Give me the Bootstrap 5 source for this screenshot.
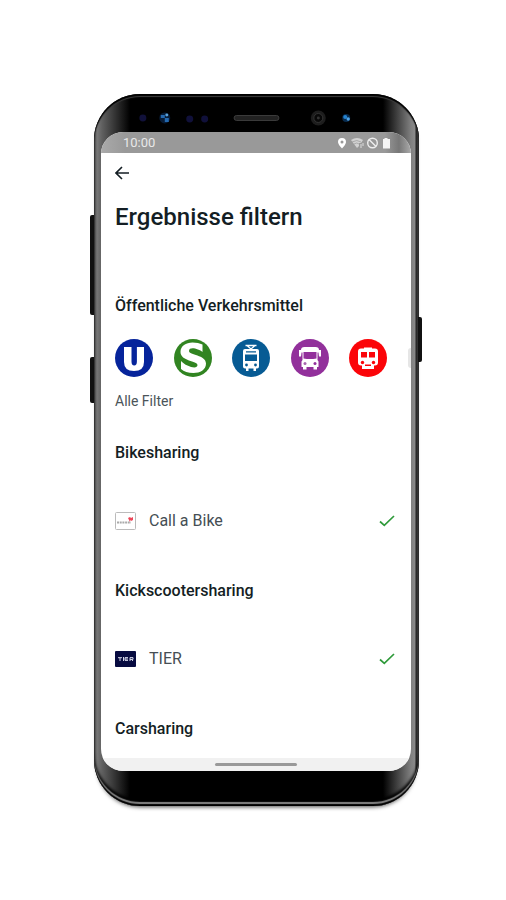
<!DOCTYPE html>
<html lang="de">
<head>
<meta charset="utf-8">
<meta name="viewport" content="width=device-width, initial-scale=1">
<title>Ergebnisse filtern</title>
<link href="https://cdn.jsdelivr.net/npm/bootstrap@5.3.0/dist/css/bootstrap.min.css" rel="stylesheet">
<style>
  body { font-family: Roboto, "Liberation Sans", sans-serif; background: #fff; color: #141e24; }
  .stage { padding: 94px 87px 94px 94px; }
  .phone {
    border-radius: 46px;
    padding: 0 8px 0 7px;
    background: linear-gradient(90deg, #555 0, #777 3px, #606060 8px, #000 36px, #000 calc(100% - 36px), #808080 calc(100% - 8px), #8a8a8a calc(100% - 4px), #222 calc(100% - 3px), #555 100%);
    box-shadow: 0 4px 4px -3px rgba(0,0,0,.7);
  }
  .phone::before {
    content: ""; position: absolute; inset: 0; border-radius: inherit; pointer-events: none;
    box-shadow: inset 0 2px 1px #000, inset 0 3px 1px #444, inset 0 -2px 1px #000, inset 0 -4px 1px #888, inset 0 -7px 3px #000;
  }
  .side-key { position: absolute; width: 4px; background: #111; }
  .key-volume { left: -4px; top: 121px; height: 100px; border-radius: 2px 0 0 2px; }
  .key-assist { left: -4px; top: 263px; height: 46px; border-radius: 2px 0 0 2px; }
  .key-power { right: -3px; top: 223px; height: 45px; border-radius: 0 2px 2px 0; }
  .forehead, .forehead svg { height: 38px; }
  .forehead svg { display: block; width: 100%; }
  .display { background: #fff; border-radius: 22px; }
  .statusbar { height: 21px; padding: 0 20px 0 22px; color: #e8e8e8; font-size: 13px; background: linear-gradient(90deg, #aaa 0, #999 24px, #999 calc(100% - 26px), #777 calc(100% - 12px), #aaa 100%); }
  .view { padding: 0 0 17px 14px; }
  .back { width: 40px; height: 40px; padding: 0; color: #141e24; }
  .back svg { display: block; }
  .page-title { font-size: 24px; line-height: 32px; font-weight: 500; margin: 8px 0 61px; }
  .group-title { font-size: 16px; line-height: 24px; font-weight: 500; margin: 0; }
  .modes { margin-top: 21px; }
  .mode { width: 38px; height: 38px; padding: 0; border: 0; background: none; flex: none; }
  .mode svg { display: block; }
  .next-mode { width: 3px; height: 20px; background: #e6e6e6; border-radius: 10px 0 0 10px; }
  .all-filters { display: block; font-size: 14px; line-height: 20px; margin: 14px 0 30px; color: #4b5459; text-decoration: none; }
  .provider { min-height: 40px; margin: 36px 16px 38px 0; font-size: 16px; line-height: 24px; color: #454e54; gap: 13px; }
  .pick { appearance: none; width: 16px; height: 16px; margin: 0; }
  .pick:checked { background: url("data:image/svg+xml,%3Csvg xmlns='http://www.w3.org/2000/svg' viewBox='0 0 16 16'%3E%3Cpath d='M1 8.5 5.3 12.4 15 3' fill='none' stroke='%232f9a3a' stroke-width='1.7'/%3E%3C/svg%3E") center / contain no-repeat; }
  .homebar { height: 13px; background: #f1f1f1; }
  .home-pill { width: 82px; height: 3px; border-radius: 2px; background: #999; }
  .chin { height: 35px; }
</style>
</head>
<body>
<main class="stage">
  <div class="phone position-relative">
    <span class="side-key key-volume"></span>
    <span class="side-key key-assist"></span>
    <span class="side-key key-power"></span>

    <div class="forehead">
      <svg viewBox="0 0 311 38" aria-hidden="true">
        <circle cx="42" cy="24" r="3.5" fill="#11113a"/>
        <circle cx="64" cy="24" r="5.5" fill="#071b36"/>
        <path d="M60 21h4v3h-4zM64 24h4v4h-4z" fill="#2469b0"/><circle cx="66" cy="21" r="1.5" fill="#59a3dc"/>
        <circle cx="89" cy="25" r="3.5" fill="#10103a"/><circle cx="104" cy="25" r="3.5" fill="#10103a"/>
        <rect x="133.500" y="21.500" width="45" height="5" rx="2.500" fill="#222" stroke="#3c3c3c"/>
        <circle cx="218" cy="24" r="7.500" fill="#1d1d1d"/><circle cx="218" cy="24" r="4.500" fill="#080808" stroke="#333"/><circle cx="218" cy="24" r="1.500" fill="#333"/>
        <circle cx="246" cy="24" r="4" fill="#082b4d"/><circle cx="245" cy="23" r="2" fill="#2583d0"/><circle cx="248" cy="25" r="1.700" fill="#51a4e8"/>
      </svg>
    </div>

    <div class="display overflow-hidden">
      <div class="statusbar d-flex align-items-center justify-content-between">
        <span>10:00</span>
        <svg width="54" height="12" viewBox="0 0 54 12" aria-hidden="true">
          <path fill="#fff" fill-rule="evenodd" d="M5 1a4 4 0 0 0-4 4c0 2.500 4 6.500 4 6.500S9 7.500 9 5a4 4 0 0 0-4-4zm0 2.500a1.500 1.500 0 1 1 0 3 1.500 1.500 0 0 1 0-3z"/>
          <path fill="#d2d2d2" d="M14 3q6-4 12 0l-2 3h-2v3l-2 2z"/>
          <path d="M15 5q5-3 9 0M17 7q3-2 5 0" fill="none" stroke="#999" stroke-width=".7"/>
          <path d="M24 7v4M26 6v3" stroke="#ddd" fill="none"/>
          <circle cx="35.500" cy="6" r="4.800" fill="none" stroke="#eee" stroke-width="1.400"/><path d="m32 2.500 7 7" stroke="#eee" stroke-width="1.400"/>
          <path d="M47.500 1h3v1H53v9.500h-7V2h1.500z" fill="#f4f4f4"/>
        </svg>
      </div>

      <div class="view">
        <button type="button" class="btn border-0 back d-flex align-items-center" aria-label="Zurück">
          <svg width="14" height="14" viewBox="0 0 14 14"><path d="M14 7H1.500M7 1 1 7l6 6" fill="none" stroke="currentColor" stroke-width="1.600"/></svg>
        </button>
        <h1 class="page-title">Ergebnisse filtern</h1>

        <h2 class="group-title">Öffentliche Verkehrsmittel</h2>
        <div class="modes d-flex align-items-center justify-content-between">
          <button type="button" class="mode" aria-label="U-Bahn">
            <svg viewBox="0 0 38 38"><circle cx="19" cy="19" r="19" fill="#06249b"/><path d="M9 8h7.500v14.500q0 4 2.700 4t2.700-4V8H29v15q0 9-10 9T9 23z" fill="#fff"/></svg>
          </button>
          <button type="button" class="mode" aria-label="S-Bahn">
            <svg viewBox="0 0 38 38"><circle cx="19" cy="19" r="19" fill="#318421"/><path d="M28.500 5.500V13C25 10 15 7 15 12c0 4.500 17 3.500 17 12.500C32 31 26 34 19.500 34 14 34 10 32.500 7 30V22c5 5.500 16.500 9 16.500 4C23.500 21.500 6.500 22.500 6.500 13 6.500 7 12 3.500 18.500 3.500c4 0 7 .7 10 2z" fill="#fff"/></svg>
          </button>
          <button type="button" class="mode" aria-label="Tram">
            <svg viewBox="0 0 38 38"><circle cx="19" cy="19" r="19" fill="#075b94"/><path d="M13.500 6.500h11M15.500 7l3.500 3 3.500-3" fill="none" stroke="#fff" stroke-width="1.300"/><path d="M13 10h12q2 0 2 2v15.500q0 2-2 2H13q-2 0-2-2V12q0-2 2-2zM14 29h2.500v3H14zM21.500 29H24v3h-2.500z" fill="#fff"/><path d="M14 12.200h10v1.300H14zM13 15.500h12v6.500H13z" fill="#075b94"/><circle cx="14.500" cy="26" r="1.400" fill="#075b94"/><circle cx="23.500" cy="26" r="1.400" fill="#075b94"/></svg>
          </button>
          <button type="button" class="mode" aria-label="Bus">
            <svg viewBox="0 0 38 38"><circle cx="19" cy="19" r="19" fill="#92309b"/><path d="M13.500 8h11q3.500 0 3.500 3h2v6.500h-2l-.5-4h-1V21l1 1.500V28H26v2.500h-3.500V28h-7v2.500H12V28h-1.500v-5.500l1-1.500v-7.500h-1l-.5 4H8V11h2q0-3 3.500-3z" fill="#fff"/><path d="M12.500 13h13v6.500q-6.500 1-13 0z" fill="#92309b"/><circle cx="14" cy="24.500" r="1.500" fill="#a865ae"/><circle cx="24" cy="24.500" r="1.500" fill="#92309b"/></svg>
          </button>
          <button type="button" class="mode" aria-label="Regionalzug">
            <svg viewBox="0 0 38 38"><circle cx="19" cy="19" r="19" fill="#fb0509"/><path d="M15 8.500h8v1h3q3 0 3 3v11q0 3-3 3h-1V30H13v-3.500h-1q-3 0-3-3v-11q0-3 3-3h3z" fill="#fff"/><path d="M12 13h6v5.500h-6zM20 13h6v5.500h-6zM16 25.500h6V27h-6z" fill="#fb0509"/><circle cx="13.500" cy="23.500" r="1.700" fill="#fb0509"/><circle cx="24.500" cy="23.500" r="1.700" fill="#fb0509"/></svg>
          </button>
          <span class="next-mode"></span>
        </div>
        <a href="#" class="all-filters">Alle Filter</a>

        <h2 class="group-title">Bikesharing</h2>
        <label class="provider d-flex align-items-center" for="call-a-bike">
          <svg width="21" height="18" viewBox="0 0 21 18" aria-hidden="true"><rect x=".5" y=".5" width="20" height="17" rx="1" fill="#fff" stroke="#bbb"/><path d="M2 10.500h14" stroke="#aaa" stroke-width="2" stroke-dasharray="2 .7"/><path d="m13 6 2-1 1 1 2-1v3l-2 1-1-1-1 2v-2z" fill="#ec4658"/></svg>
          <span class="flex-grow-1">Call a Bike</span>
          <input class="pick" type="checkbox" id="call-a-bike" checked>
        </label>

        <h2 class="group-title">Kickscootersharing</h2>
        <label class="provider d-flex align-items-center" for="tier">
          <svg width="21" height="16" viewBox="0 0 21 16" aria-hidden="true"><rect width="21" height="16" rx="1" fill="#070b40"/><path d="M3 6.700h4M5 6.700V10M8.500 6v4M13 6.600h-3v2.800h3M10 8h3M15 10V6.600h3V8.400h-3M16.500 8.400 18 10" fill="none" stroke="#d5d7e8"/></svg>
          <span class="flex-grow-1">TIER</span>
          <input class="pick" type="checkbox" id="tier" checked>
        </label>

        <h2 class="group-title">Carsharing</h2>
      </div>

      <div class="homebar d-flex align-items-center justify-content-center"><span class="home-pill"></span></div>
    </div>
    <div class="chin"></div>
  </div>
</main>
<script src="https://cdn.jsdelivr.net/npm/bootstrap@5.3.0/dist/js/bootstrap.bundle.min.js"></script>
</body>
</html>
